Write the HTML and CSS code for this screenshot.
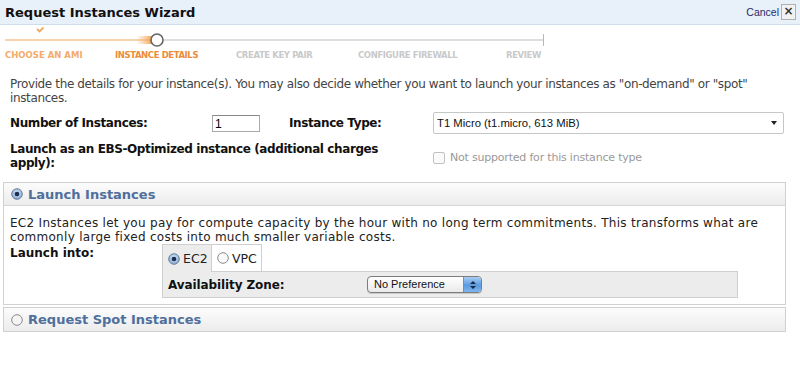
FILE: index.html
```html
<!DOCTYPE html>
<html>
<head>
<meta charset="utf-8">
<link rel="stylesheet" href="styles.css">
</head>
<body>
<div class="header">
  <div class="title">Request Instances Wizard</div>
  <div class="cancel"><span class="cancel-text">Cancel</span><span class="close-box">×</span></div>
</div>

<div class="stepper">
  <svg class="track" width="800" height="24" viewBox="0 0 800 24">
    <defs>
      <linearGradient id="glow" x1="0" x2="1" y1="0" y2="0">
        <stop offset="0" stop-color="#f5b06a" stop-opacity="0"/>
        <stop offset="1" stop-color="#f39a3c" stop-opacity="0.9"/>
      </linearGradient>
    </defs>
    <line x1="5" y1="15" x2="152" y2="15" stroke="#f6d3ad" stroke-width="2"/>
    <rect x="136" y="11" width="16" height="8" fill="url(#glow)"/>
    <line x1="163" y1="15" x2="543" y2="15" stroke="#dedede" stroke-width="2"/>
    <line x1="543.5" y1="9" x2="543.5" y2="21" stroke="#b8b8b8" stroke-width="1"/>
    <circle cx="157" cy="15" r="6" fill="#fff" stroke="#666" stroke-width="1.6"/>
    <path d="M37 4 L39.5 6.5 L43.5 2.5" fill="none" stroke="#f0a860" stroke-width="1.8"/>
  </svg>
  <div class="steps">
    <span class="step done s1">CHOOSE AN AMI</span>
    <span class="step current s2">INSTANCE DETAILS</span>
    <span class="step s3">CREATE KEY PAIR</span>
    <span class="step s4">CONFIGURE FIREWALL</span>
    <span class="step s5">REVIEW</span>
  </div>
</div>

<p class="intro">Provide the details for your instance(s). You may also decide whether you want to launch your instances as "on-demand" or "spot" instances.</p>

<div class="form">
  <label class="lbl">Number of Instances:</label>
  <div><span class="text-input">1</span></div>
  <label class="lbl">Instance Type:</label>
  <div class="select"><span>T1 Micro (t1.micro, 613 MiB)</span><span class="caret"></span></div>

  <label class="lbl ebs">Launch as an EBS-Optimized instance (additional charges apply):</label>
  <div class="check-row"><span class="checkbox"></span><span class="check-text">Not supported for this instance type</span></div>
</div>

<div class="panel open">
  <div class="panel-head">
    <svg class="radio" width="12" height="12" viewBox="0 0 12 12"><defs><radialGradient id="rb" cx="0.5" cy="0.4" r="0.6"><stop offset="0" stop-color="#dbe9f8"/><stop offset="1" stop-color="#7fa6d3"/></radialGradient></defs><circle cx="6" cy="6" r="5.3" fill="url(#rb)" stroke="#6d7f96" stroke-width="1"/><circle cx="6" cy="6" r="2.3" fill="#1b2f52"/></svg>
    <span class="panel-title">Launch Instances</span>
  </div>
  <div class="panel-body">
    <p class="panel-text">EC2 Instances let you pay for compute capacity by the hour with no long term commitments. This transforms what are commonly large fixed costs into much smaller variable costs.</p>
    <div class="launch-row">
      <div class="launch-label">Launch into:</div>
      <div class="tabs">
        <div class="tab-strip">
          <div class="tab active">
            <svg class="radio" width="12" height="12" viewBox="0 0 12 12"><circle cx="6" cy="6" r="5.3" fill="url(#rb)" stroke="#6d7f96" stroke-width="1"/><circle cx="6" cy="6" r="2.3" fill="#1b2f52"/></svg>
            <span>EC2</span>
          </div>
          <div class="tab">
            <svg class="radio" width="12" height="12" viewBox="0 0 12 12"><circle cx="6" cy="6" r="5.3" fill="#fafafa" stroke="#8a8a8a" stroke-width="1"/></svg>
            <span>VPC</span>
          </div>
          <div class="tab-rest"></div>
        </div>
        <div class="tab-panel">
          <span class="az-label">Availability Zone:</span>
          <div class="popup"><span class="popup-text">No Preference</span><span class="popup-arrows"><svg width="8" height="10" viewBox="0 0 8 10"><path d="M1 4 L4 1 L7 4 Z M1 6 L4 9 L7 6 Z" fill="#1a2a44"/></svg></span></div>
        </div>
      </div>
    </div>
  </div>
</div>

<div class="panel closed">
  <div class="panel-head">
    <svg class="radio" width="12" height="12" viewBox="0 0 12 12"><circle cx="6" cy="6" r="5.3" fill="#f4f4f4" stroke="#8a8a8a" stroke-width="1"/></svg>
    <span class="panel-title">Request Spot Instances</span>
  </div>
</div>
</body>
</html>
```

FILE: styles.css
```css
html, body {
  margin: 0;
  padding: 0;
  background: #fff;
}
body {
  font-family: "DejaVu Sans", Verdana, sans-serif;
  font-size: 12px;
  color: #333;
  width: 800px;
  height: 375px;
  overflow: hidden;
}
.header {
  height: 24px;
  background: #e8f0fa;
  border-bottom: 1px solid #cfdcec;
  display: flex;
  align-items: center;
  justify-content: space-between;
  padding: 0 4px 0 5px;
}
.title {
  font-weight: bold;
  font-size: 13px;
  color: #111;
}
.cancel {
  display: flex;
  align-items: center;
  gap: 2px;
}
.cancel-text {
  font-size: 10.5px;
  color: #1f2c6a;
  font-family: "Liberation Sans", Arial, sans-serif;
}
.close-box {
  width: 13px;
  height: 14px;
  border: 1px solid #b0b0b0;
  background: #f2f2f2;
  font-size: 12px;
  line-height: 13px;
  text-align: center;
  color: #333;
  font-weight: bold;
}
.stepper {
  height: 37px;
}
.track {
  display: block;
}
.steps {
  display: flex;
  padding-left: 5px;
  font-size: 8.5px;
  font-weight: bold;
  line-height: 12px;
  color: #c9c9c9;
  letter-spacing: -0.4px;
}
.step { flex: none; }
.s1 { width: 110px; }
.s2 { width: 121px; }
.s3 { width: 122px; }
.s4 { width: 148px; }
.step.done { color: #f3aa6a; letter-spacing: 0; }
.step.current { color: #ec8c3a; }
.intro {
  margin: 15px 30px 0 10px;
  line-height: 14px;
  color: #444;
  letter-spacing: -0.37px;
}
.form {
  display: grid;
  grid-template-columns: 202px 77px 144px 351px;
  padding-left: 10px;
  margin-top: 7px;
  row-gap: 8px;
  align-items: center;
}
.lbl {
  font-weight: bold;
  color: #111;
  line-height: 14px;
  letter-spacing: -0.4px;
}
.text-input {
  display: block;
  width: 42px;
  height: 15px;
  border: 1px solid #aaa;
  border-top-color: #888;
  padding: 0 2px;
  font-family: "Liberation Sans", Arial, sans-serif;
  font-size: 12px;
  line-height: 17px;
  color: #000;
}
.select {
  height: 20px;
  border: 1px solid #c6c6c6;
  border-radius: 2px;
  display: flex;
  align-items: center;
  justify-content: space-between;
  padding: 0 6px 0 3px;
  font-family: "Liberation Sans", Arial, sans-serif;
  font-size: 11.3px;
  color: #111;
  background: #fff;
}
.caret {
  width: 0;
  height: 0;
  border-left: 3.5px solid transparent;
  border-right: 3.5px solid transparent;
  border-top: 4px solid #222;
}
.ebs {
  grid-column: 1 / 4;
  padding-right: 8px;
}
.check-row {
  display: flex;
  align-items: center;
  gap: 5px;
  align-self: start;
  padding-top: 9px;
}
.checkbox {
  width: 10px;
  height: 10px;
  border: 1px solid #c2c2c2;
  border-radius: 2px;
  background: #fafafa;
}
.check-text {
  font-size: 11px;
  color: #999;
  letter-spacing: -0.2px;
}
.panel {
  margin: 0 14px 0 3px;
  border: 1px solid #d0d0d0;
}
.panel.open { margin-top: 12px; }
.panel.closed { margin-top: 2px; }
.panel-head {
  height: 22px;
  display: flex;
  align-items: center;
  gap: 5px;
  padding-left: 7px;
  background: linear-gradient(#fcfcfc, #ececec);
}
.panel.closed .panel-head { height: 23px; }
.panel.open .panel-head { border-bottom: 1px solid #d6d6d6; }
.panel-title {
  font-weight: bold;
  font-size: 13px;
  color: #4f6f9c;
}
.radio { flex: none; display: block; }
.panel-body {
  padding: 10px 10px 6px 6px;
}
.panel-text {
  margin: 0;
  line-height: 14px;
  color: #222;
  letter-spacing: 0.29px;
}
.launch-row {
  display: flex;
  margin-top: 0;
}
.launch-label {
  width: 152px;
  font-weight: bold;
  color: #111;
  padding-top: 2px;
  flex: none;
}
.tabs {
  width: 576px;
}
.tab-strip {
  display: flex;
  height: 28px;
}
.tab {
  display: flex;
  align-items: center;
  gap: 3px;
  padding: 0 5px;
  border: 1px solid #cfcfcf;
  border-left: none;
  background: #fff;
  font-size: 12.5px;
  color: #222;
}
.tab.active {
  width: 38px;
  border-left: 1px solid #cfcfcf;
  border-bottom: none;
  background: #ececec;
}
.tab:not(.active) {
  width: 39px;
}
.tab-rest {
  flex: 1;
  border-bottom: 1px solid #cfcfcf;
}
.tab-panel {
  height: 25px;
  background: #ececec;
  border: 1px solid #cfcfcf;
  border-top: none;
  display: flex;
  align-items: center;
  padding-left: 5px;
}
.az-label {
  font-weight: bold;
  font-size: 12px;
  color: #111;
  width: 199px;
  letter-spacing: -0.1px;
}
.popup {
  width: 113px;
  height: 15px;
  border: 1px solid #7d7d7d;
  border-radius: 4px;
  background: linear-gradient(#ffffff, #e9e9e9);
  display: flex;
  justify-content: space-between;
  overflow: hidden;
  box-shadow: 0 1px 0 rgba(0,0,0,0.15);
}
.popup-text {
  font-family: "Liberation Sans", Arial, sans-serif;
  font-size: 11px;
  line-height: 15px;
  padding-left: 6px;
  color: #111;
}
.popup-arrows {
  width: 17px;
  background: linear-gradient(#a9cdf4, #5b9ae0 55%, #7fb5ee);
  border-left: 1px solid #6f8fb6;
  display: flex;
  align-items: center;
  justify-content: center;
}
```
